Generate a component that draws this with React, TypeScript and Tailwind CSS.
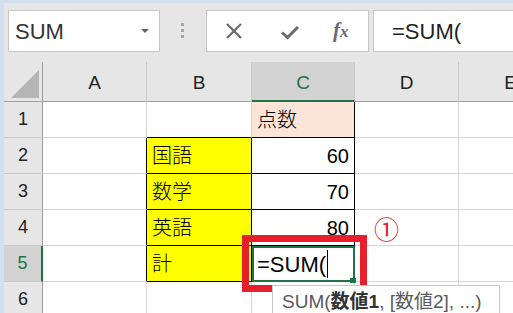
import type { ReactNode } from "react";
import clsx from "clsx";

const GRID = "border-[#d4d4d4]";

function Cell({ className, children }: { className?: string; children?: ReactNode }) {
  return (
    <div className={clsx("flex items-center border-r border-b text-[20px] text-black", GRID, className)}>
      {children}
    </div>
  );
}

function RowHead({ n, active }: { n: number; active?: boolean }) {
  return (
    <div
      className={clsx(
        "flex items-center justify-center border-b border-[#c8c8c8] text-[18px]",
        active
          ? "border-r-2 border-r-[#217346] bg-[#d2d2d2] text-[#217346]"
          : "border-r border-r-[#9e9e9e] bg-[#e6e6e6] text-[#222]"
      )}
    >
      {n}
    </div>
  );
}

function ColHead({ label, active }: { label: string; active?: boolean }) {
  return (
    <div
      className={clsx(
        "flex items-center justify-center border-r border-r-[#c8c8c8] pt-1 text-[19px]",
        active
          ? "border-b-2 border-b-[#217346] bg-[#d2d2d2] text-[#217346]"
          : "border-b border-b-[#9e9e9e] bg-[#e6e6e6] text-[#222]"
      )}
    >
      {label}
    </div>
  );
}

const JP = "pl-[5px] font-light";

export default function App() {
  return (
    <div
      className="relative h-[313px] w-[513px] overflow-hidden bg-[#d3deee]"
      style={{ fontFamily: '"Liberation Sans", "Noto Sans CJK JP", sans-serif' }}
    >
      <div className="ml-[4px] mt-[3px] h-[310px] overflow-hidden bg-white">
        {/* formula bar */}
        <div className="flex h-[59px] items-start bg-[#e6e6e6] pt-[7px]">
          <div className="ml-[4px] flex h-[42px] w-[152px] shrink-0 items-center justify-between border border-[#c6c6c6] bg-white pl-[6px] pr-[10px]">
            <span className="text-[22px] text-[#333]">SUM</span>
            <span className="h-0 w-0 border-x-[4px] border-t-[4px] border-x-transparent border-t-[#666]" />
          </div>
          <div className="ml-[21px] mt-[13px] flex flex-col gap-[3px]">
            <span className="h-[3px] w-[3px] bg-[#a6a6a6]" />
            <span className="h-[3px] w-[3px] bg-[#a6a6a6]" />
            <span className="h-[3px] w-[3px] bg-[#a6a6a6]" />
          </div>
          <div className="ml-[22px] flex h-[42px] w-[163px] shrink-0 items-center border border-[#c6c6c6] bg-white">
            <svg width="18" height="18" viewBox="0 0 18 18" className="ml-[18px]">
              <path d="M2 2 L16 16 M16 2 L2 16" stroke="#6b6b6b" strokeWidth="2.2" fill="none" />
            </svg>
            <svg width="20" height="16" viewBox="0 0 20 16" className="ml-[37px] mt-[2px]">
              <path d="M2 8.5 L7.5 13.5 L18 3" stroke="#6b6b6b" strokeWidth="3" fill="none" />
            </svg>
            <span
              className="ml-[33px] text-[21px] italic text-[#6b6b6b]"
              style={{ fontFamily: '"Liberation Serif", serif' }}
            >
              <span className="font-bold">f</span>
              <span className="text-[17px] font-bold">x</span>
            </span>
          </div>
          <div className="ml-[4px] flex h-[42px] flex-1 items-center border border-r-0 border-[#c6c6c6] bg-white pl-[18px]">
            <span className="text-[22px] text-[#222]">=SUM(</span>
          </div>
        </div>

        {/* sheet */}
        <div className="grid w-[600px] grid-cols-[39px_104px_105px_103px_104px_104px_1fr] grid-rows-[40px_36px_36px_36px_36px_36px_36px]">
          <div className="flex items-end justify-end border-r border-b border-r-[#9e9e9e] border-b-[#9e9e9e] bg-[#e6e6e6] pb-[3px] pr-[3px]">
            <svg width="28" height="28" viewBox="0 0 28 28">
              <path d="M28 0 L28 28 L0 28 Z" fill="#b5b5b5" />
            </svg>
          </div>
          <ColHead label="A" />
          <ColHead label="B" />
          <ColHead label="C" active />
          <ColHead label="D" />
          <ColHead label="E" />
          <ColHead label="F" />

          <RowHead n={1} />
          <Cell />
          <Cell className="border-b-black" />
          <Cell className={clsx("border-r-black border-b-black bg-[#fce4d6]", JP)}>点数</Cell>
          <Cell />
          <Cell />
          <Cell />

          <RowHead n={2} />
          <Cell className="border-r-black" />
          <Cell className={clsx("border-r-black border-b-black bg-[#ffff00]", JP)}>国語</Cell>
          <Cell className="justify-end border-r-black border-b-black pr-[5px]">60</Cell>
          <Cell />
          <Cell />
          <Cell />

          <RowHead n={3} />
          <Cell className="border-r-black" />
          <Cell className={clsx("border-r-black border-b-black bg-[#ffff00]", JP)}>数学</Cell>
          <Cell className="justify-end border-r-black border-b-black pr-[5px]">70</Cell>
          <Cell />
          <Cell />
          <Cell />

          <RowHead n={4} />
          <Cell className="border-r-black" />
          <Cell className={clsx("border-r-black border-b-black bg-[#ffff00]", JP)}>英語</Cell>
          <Cell className="justify-end border-r-black border-b-black pr-[5px]">80</Cell>
          <Cell />
          <Cell />
          <Cell />

          <RowHead n={5} active />
          <Cell className="border-r-black" />
          <Cell className={clsx("border-r-black border-b-black bg-[#ffff00]", JP)}>計</Cell>
          <div className="relative flex items-center border-2 border-[#217346] pl-[3px] text-[22px] text-black">
            <span>=SUM(</span>
            <span className="ml-[1px] h-[28px] w-px bg-black" />
            <span className="absolute -right-[3px] -bottom-[3px] h-[5px] w-[6px] bg-[#217346]" />
          </div>
          <Cell />
          <Cell />
          <Cell />

          <RowHead n={6} />
          <Cell />
          <Cell />
          <Cell />
          <Cell />
          <Cell />
          <Cell />
        </div>
      </div>

      {/* annotation */}
      <div className="absolute left-[242px] top-[235px] h-[57px] w-[125px] border-[7px] border-[#e5202a]" />
      <span
        className="absolute left-[374px] top-[216px] text-[25px] leading-none text-[#e5202a]"
        style={{ fontFamily: '"Noto Sans CJK JP", sans-serif' }}
      >
        ①
      </span>

      {/* tooltip */}
      <div className="absolute left-[272px] top-[285px] flex h-[34px] w-[228px] items-start whitespace-nowrap border border-[#c6c6c6] bg-white pl-[9px] pt-[2px] text-[19px] text-[#5a5a5a]">
        SUM(<span className="font-bold text-[#333]">数値1</span>, [数値2], ...)
      </div>
    </div>
  );
}
